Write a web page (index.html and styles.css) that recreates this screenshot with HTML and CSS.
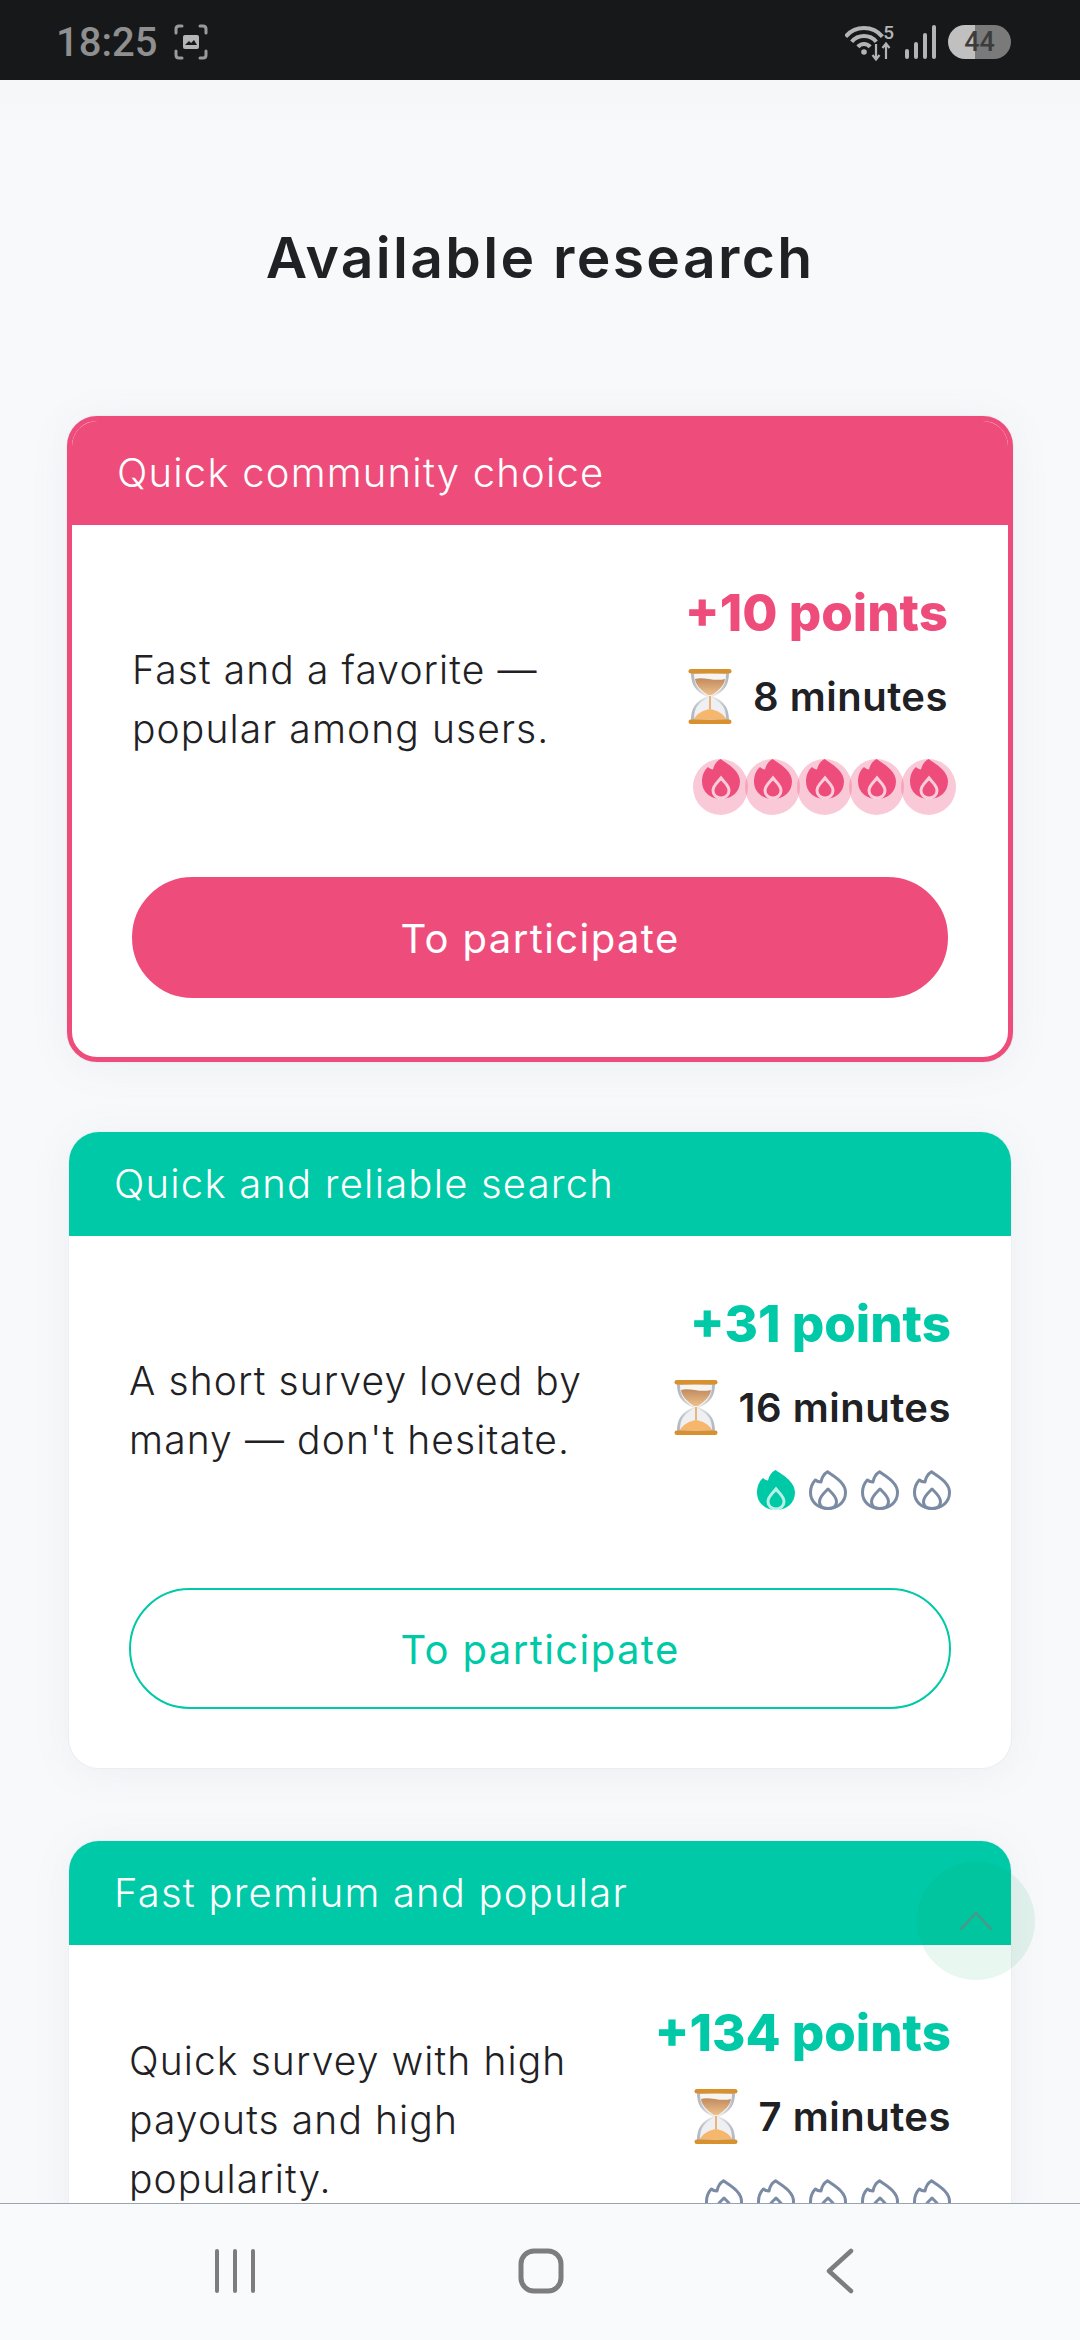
FILE: index.html
```html
<!DOCTYPE html>
<html lang="en">
<head>
  <meta charset="UTF-8">
  <title>Available research</title>
  <link rel="stylesheet" href="styles.css">
</head>
<body>

<svg class="sprites" width="0" height="0">
  <defs>
    <linearGradient id="glass" x1="0" y1="0" x2="1" y2="0">
      <stop offset="0" stop-color="#aeb4bd"/>
      <stop offset="0.5" stop-color="#f3f2f0"/>
      <stop offset="1" stop-color="#aeb4bd"/>
    </linearGradient>
    <linearGradient id="sandTop" x1="0" y1="0" x2="0" y2="1">
      <stop offset="0" stop-color="#c08a5e"/>
      <stop offset="1" stop-color="#eec08c"/>
    </linearGradient>
    <symbol id="hourglass" viewBox="0 0 44 55">
      <path d="M3 3 H41 C41 16 37 22 25 27.500 C37 33 41 39 41 52 H3 C3 39 7 33 19 27.500 C7 22 3 16 3 3Z" fill="url(#glass)"/>
      <path d="M6 5 H38 C38 15 34 21 24.500 26.500 H19.500 C10 21 6 15 6 5Z" fill="#f7f5f2"/>
      <path d="M6 50 H38 C38 39 34 34 24.500 29 H19.500 C10 34 6 39 6 50Z" fill="#eef0f3"/>
      <path d="M7 10 C15 7 26 13 37 10 C36 17 31 21 24 26 H20 C13 21 8 17 7 10Z" fill="url(#sandTop)"/>
      <path d="M21 27 H23 V40 H21Z" fill="#e9b47a"/>
      <path d="M6 50 C9 44 16 41 22 40 C28 41 35 44 38 50Z" fill="#f6b66b"/>
      <rect x="0.500" y="0" width="43" height="4.500" rx="2.200" fill="#d9902f"/>
      <rect x="0.500" y="50.500" width="43" height="4.500" rx="2.200" fill="#d9902f"/>
    </symbol>
    <symbol id="flame-on" viewBox="0 0 38 40">
      <path fill="currentColor" d="M18.500 0 C24 4 38 11 38 22.500 C38 33 29.500 40 19 40 C8.500 40 0 33 0 22.500 C0 16 2.500 11 6 8 C7.500 9.500 9.500 10.500 11 10.500 C12 6 14.500 2 18.500 0Z"/>
      <path fill="none" stroke="#fff" stroke-width="3" stroke-opacity="0.72" d="M19 19 C22 23 27 26.500 27 31.500 C27 36 23.500 39 19 39 C14.500 39 11 36 11 31.500 C11 26.500 16 23 19 19Z"/>
    </symbol>
    <symbol id="flame-off" viewBox="0 0 38 40">
      <g fill="none" stroke="currentColor" stroke-width="3" stroke-linejoin="round">
        <path d="M18.500 1.800 C24 6 36.500 12 36.500 22.500 C36.500 32 28.500 38.500 19 38.500 C9.500 38.500 1.500 32 1.500 22.500 C1.500 17 3.500 13 6.300 10 C7.800 11.300 9.800 12 12 12 C12.800 7.500 15 4 18.500 1.800Z"/>
        <path d="M19 19 C22.500 22.500 27.500 26.500 27.500 31.500 C27.500 36 23.500 38.500 19 38.500 C14.500 38.500 10.500 36 10.500 31.500 C10.500 26.500 15.500 22.500 19 19Z"/>
      </g>
    </symbol>
  </defs>
</svg>

<div class="phone">
  <div class="status-bar">
    <div class="status-left">
      <span class="clock">18:25</span>
      <svg class="shot-icon" width="34" height="36" viewBox="0 0 34 36" fill="none" stroke="#9a9a9a" stroke-width="3" stroke-linecap="round">
        <path d="M2 9 V5 Q2 2 5 2 H8 M26 2 H29 Q32 2 32 5 V9 M32 27 V31 Q32 34 29 34 H26 M8 34 H5 Q2 34 2 31 V27"/>
        <rect x="9" y="11" width="16" height="14" rx="2" fill="#b5b5b5" stroke="none"/>
        <path d="M11 21 L15 17 L17 19 L20 16 L23 21Z" fill="#17181a" stroke="none"/>
      </svg>
    </div>
    <div class="status-right">
      <svg class="wifi-icon" width="48" height="38" viewBox="0 0 48 38" fill="none" stroke="#b4b4b4" stroke-width="4">
        <path d="M0.600 12.600 A24 24 0 0 1 37.400 12.600"/>
        <path d="M6.700 17.700 A16 16 0 0 1 31.300 17.700"/>
        <path d="M12.900 22.900 A8 8 0 0 1 25.100 22.900"/>
        <circle cx="19" cy="28" r="2.800" fill="#b4b4b4" stroke="none"/>
        <path stroke-width="2.200" d="M31 20 V35 M27.500 31 L31 35.500 L34.500 31 M41 35 V20 M37.500 24 L41 19.500 L44.500 24"/>
      </svg>
      <span class="net-five">5</span>
      <svg class="signal-icon" width="32" height="36" viewBox="0 0 32 36" fill="#b4b4b4">
        <rect x="0" y="25" width="4" height="10" rx="2"/>
        <rect x="9" y="18" width="4" height="17" rx="2"/>
        <rect x="18" y="9" width="4" height="26" rx="2"/>
        <rect x="27" y="1" width="4" height="34" rx="2"/>
      </svg>
      <div class="battery"><span>44</span></div>
    </div>
  </div>

  <main class="content">
    <h1 class="page-title">Available research</h1>

    <section class="card card-hot">
      <h2 class="card-head">Quick community choice</h2>
      <div class="card-body">
        <div class="card-row">
          <p class="card-text">Fast and a favorite — popular among users.</p>
          <div class="card-meta">
            <div class="points">+10 points</div>
            <div class="duration">
              <svg class="hourglass"><use href="#hourglass"/></svg>
              <span>8 minutes</span>
            </div>
            <div class="flames">
              <span class="flame glow"><svg><use href="#flame-on"/></svg></span>
              <span class="flame glow"><svg><use href="#flame-on"/></svg></span>
              <span class="flame glow"><svg><use href="#flame-on"/></svg></span>
              <span class="flame glow"><svg><use href="#flame-on"/></svg></span>
              <span class="flame glow"><svg><use href="#flame-on"/></svg></span>
            </div>
          </div>
        </div>
        <button class="join-btn">To participate</button>
      </div>
    </section>

    <section class="card">
      <h2 class="card-head">Quick and reliable search</h2>
      <div class="card-body">
        <div class="card-row">
          <p class="card-text">A short survey loved by many — don't hesitate.</p>
          <div class="card-meta">
            <div class="points">+31 points</div>
            <div class="duration">
              <svg class="hourglass"><use href="#hourglass"/></svg>
              <span>16 minutes</span>
            </div>
            <div class="flames">
              <span class="flame"><svg><use href="#flame-on"/></svg></span>
              <span class="flame off"><svg><use href="#flame-off"/></svg></span>
              <span class="flame off"><svg><use href="#flame-off"/></svg></span>
              <span class="flame off"><svg><use href="#flame-off"/></svg></span>
            </div>
          </div>
        </div>
        <button class="join-btn">To participate</button>
      </div>
    </section>

    <section class="card">
      <h2 class="card-head">Fast premium and popular</h2>
      <div class="card-body">
        <div class="card-row">
          <p class="card-text">Quick survey with high payouts and high popularity.</p>
          <div class="card-meta">
            <div class="points">+134 points</div>
            <div class="duration">
              <svg class="hourglass"><use href="#hourglass"/></svg>
              <span>7 minutes</span>
            </div>
            <div class="flames">
              <span class="flame off"><svg><use href="#flame-off"/></svg></span>
              <span class="flame off"><svg><use href="#flame-off"/></svg></span>
              <span class="flame off"><svg><use href="#flame-off"/></svg></span>
              <span class="flame off"><svg><use href="#flame-off"/></svg></span>
              <span class="flame off"><svg><use href="#flame-off"/></svg></span>
            </div>
          </div>
        </div>
      </div>
    </section>

    <div class="to-top">
      <svg width="34" height="20" viewBox="0 0 34 20" fill="none" stroke="#5f8a86" stroke-opacity="0.8" stroke-width="2.500">
        <path d="M1.500 18.500 L17 2 L32.500 18.500"/>
      </svg>
    </div>
  </main>

  <nav class="nav-bar">
    <svg width="40" height="44" viewBox="0 0 40 44" fill="none" stroke="#7d7d7d" stroke-width="4" stroke-linecap="round">
      <path d="M2 2 V42 M20 2 V42 M38 2 V42"/>
    </svg>
    <svg width="46" height="46" viewBox="0 0 46 46" fill="none" stroke="#7d7d7d" stroke-width="5">
      <rect x="3" y="3" width="40" height="40" rx="13"/>
    </svg>
    <svg width="28" height="46" viewBox="0 0 28 46" fill="none" stroke="#7d7d7d" stroke-width="4.500" stroke-linecap="round" stroke-linejoin="round">
      <path d="M25 3 L3 23 L25 43"/>
    </svg>
  </nav>
</div>

</body>
</html>
```
FILE: styles.css
```css
* {
  box-sizing: border-box;
}
html, body {
  margin: 0;
  padding: 0;
}
body {
  font-family: Inter, "Open Sans", sans-serif;
  background: #f8f9fb;
  color: #1f2124;
}
.sprites {
  position: absolute;
}
.phone {
  width: 1080px;
  height: 2340px;
  display: flex;
  flex-direction: column;
  overflow: hidden;
}

/* status bar */
.status-bar {
  height: 80px;
  flex: none;
  background: #17181a;
  display: flex;
  justify-content: space-between;
  align-items: center;
  padding: 4px 69px 0 56px;
}
.status-left,
.status-right {
  display: flex;
  align-items: center;
}
.clock {
  font-family: Roboto, sans-serif;
  font-size: 40px;
  font-weight: 500;
  color: #8f8f8f;
}
.shot-icon {
  margin-left: 17px;
}
.wifi-icon {
  margin-top: 2px;
}
.net-five {
  font-family: Roboto, sans-serif;
  font-size: 19px;
  font-weight: 500;
  color: #b4b4b4;
  margin: -20px 0 0 -10px;
}
.signal-icon {
  margin-left: 11px;
}
.battery {
  width: 63px;
  height: 34px;
  margin-left: 11px;
  border-radius: 17px;
  background: linear-gradient(90deg, #c0c0c0 43%, #7a7a7a 43%);
  display: flex;
  align-items: center;
  justify-content: center;
}
.battery span {
  font-family: Roboto, sans-serif;
  font-size: 27px;
  font-weight: 500;
  color: #3c3c3c;
}

/* main area */
.content {
  position: relative;
  flex: 1;
  min-height: 0;
  overflow: hidden;
  padding: 0 69px;
  background: linear-gradient(#f6f7f9, #f8f9fb 60px);
}
.page-title {
  margin: 143px 0 123px;
  height: 70px;
  line-height: 70px;
  text-align: center;
  font-size: 57px;
  font-weight: 600;
  letter-spacing: 2.3px;
}
.card {
  --accent: #00c9a7;
  background: #fff;
  border-radius: 30px;
  margin-bottom: 73px;
  box-shadow: 0 4px 40px rgba(90, 110, 140, 0.08), 0 0 0 1px rgba(90, 110, 140, 0.04);
  overflow: hidden;
}
.card-hot {
  --accent: #ee4d7c;
  margin: 0 -2px 70px;
  border: 5px solid var(--accent);
}
.card-head {
  margin: 0;
  height: 104px;
  padding: 0 0 2px 45px;
  display: flex;
  align-items: center;
  background: var(--accent);
  color: #fff;
  font-size: 40px;
  font-weight: 300;
  letter-spacing: 1.2px;
}
.card-body {
  padding: 50px 60px 59px;
}
.card-row {
  display: flex;
  justify-content: space-between;
  align-items: center;
}
.card-text {
  margin: 0;
  width: 470px;
  font-size: 39px;
  line-height: 59px;
  font-weight: 300;
  letter-spacing: 1.1px;
}
.card-meta {
  display: flex;
  flex-direction: column;
  align-items: flex-end;
  height: 248px;
}
.points {
  height: 74px;
  line-height: 76px;
  font-size: 51px;
  font-weight: 800;
  color: var(--accent);
}
.duration {
  display: flex;
  align-items: center;
  margin-top: 20px;
  font-size: 40px;
  font-weight: 600;
  letter-spacing: 0.5px;
}
.hourglass {
  width: 44px;
  height: 55px;
  margin-right: 21px;
}
.flames {
  display: flex;
  justify-content: flex-end;
  gap: 14px;
  margin-top: 35px;
}
.flame {
  position: relative;
  width: 38px;
  height: 40px;
  color: var(--accent);
}
.flame svg {
  display: block;
  position: relative;
  width: 38px;
  height: 40px;
}
.flame.off {
  color: #7a8ba3;
}
.flame.glow::before {
  content: "";
  position: absolute;
  left: -9px;
  top: 0;
  width: 55px;
  height: 56px;
  border-radius: 50%;
  background: var(--accent);
  opacity: 0.3;
}
.join-btn {
  display: block;
  width: 100%;
  height: 121px;
  margin-top: 54px;
  padding: 2px 0 0;
  border: 2px solid var(--accent);
  border-radius: 61px;
  background: #fff;
  color: var(--accent);
  font-family: inherit;
  font-size: 40px;
  font-weight: 400;
  letter-spacing: 1.4px;
}
.card-hot .join-btn {
  background: var(--accent);
  color: #fff;
}
.to-top {
  position: absolute;
  left: 917px;
  top: 1782px;
  width: 118px;
  height: 118px;
  border-radius: 50%;
  background: rgba(0, 170, 90, 0.09);
  display: flex;
  align-items: center;
  justify-content: center;
}

/* bottom nav */
.nav-bar {
  height: 137px;
  flex: none;
  background: #f9fafc;
  border-top: 1px solid #9aa3b2;
  display: flex;
  align-items: center;
  justify-content: space-between;
  padding: 0 226px 2px 215px;
}
```
